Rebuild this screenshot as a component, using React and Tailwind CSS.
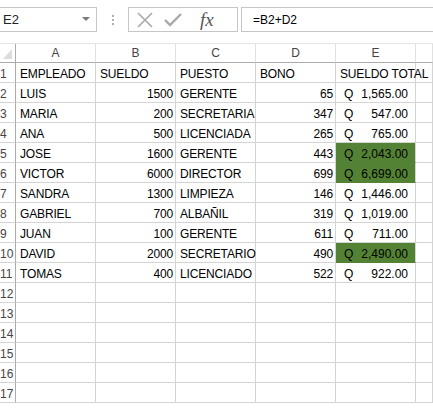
import React from "react";

const rows = [
  ["EMPLEADO", "SUELDO", "PUESTO", "BONO", null, false, "SUELDO TOTAL"],
  ["LUIS", "1500", "GERENTE", "65", "1,565.00", false],
  ["MARIA", "200", "SECRETARIA", "347", "547.00", false],
  ["ANA", "500", "LICENCIADA", "265", "765.00", false],
  ["JOSE", "1600", "GERENTE", "443", "2,043.00", true],
  ["VICTOR", "6000", "DIRECTOR", "699", "6,699.00", true],
  ["SANDRA", "1300", "LIMPIEZA", "146", "1,446.00", false],
  ["GABRIEL", "700", "ALBAÑIL", "319", "1,019.00", false],
  ["JUAN", "100", "GERENTE", "611", "711.00", false],
  ["DAVID", "2000", "SECRETARIO", "490", "2,490.00", true],
  ["TOMAS", "400", "LICENCIADO", "522", "922.00", false],
];

const font = { fontFamily: '"Liberation Sans", Arial, sans-serif' };

function RowHead({ n }) {
  return (
    <div className="h-[20px] w-[16px] border-r border-b border-r-[#ababab] border-b-[#d4d4d4] bg-white text-[12px] leading-[18px] pt-[2px] text-[#444] whitespace-nowrap flex justify-start">
      <span>{n}</span>
    </div>
  );
}

// text spills over into the next (empty) cell, like in Excel
function Cell({ children, right, className = "" }) {
  return (
    <div
      className={
        "relative h-[20px] border-r border-b border-[#d4d4d4] whitespace-nowrap text-[12px] leading-[18px] pt-[2px] text-black tracking-[-0.15px] " +
        (right ? "text-right pr-[2px] overflow-hidden " : "pl-[4px] overflow-visible z-10 ") +
        className
      }
    >
      {children}
    </div>
  );
}

function Money({ value, green }) {
  return (
    <div
      className={
        "h-[20px] border-r border-b flex justify-between pl-[8px] pr-[7px] text-[12px] leading-[18px] pt-[2px] text-black " +
        (green ? "bg-[#548235] border-b-[#548235] border-r-[#d4d4d4]" : "border-[#d4d4d4]")
      }
    >
      <span>Q</span>
      <span>{value}</span>
    </div>
  );
}

export default function App() {
  const empty = Array.from({ length: 6 }, (_, i) => i + 12);
  return (
    <div className="w-[433px] h-[408px] overflow-hidden bg-white" style={font}>
      {/* formula bar */}
      <div className="h-[43px] flex items-start pt-[7px] bg-white">
        <div className="ml-[-2px] w-[99px] h-[25px] border border-[#c6c6c6] flex items-center justify-between pl-[4px] pr-[6px]">
          <span className="text-[13px] text-[#222]">E2</span>
          <svg width="8" height="5" viewBox="0 0 8 5">
            <path d="M0 0 L8 0 L4 4 Z" fill="#7a7a7a" />
          </svg>
        </div>
        <div className="w-[31px] h-[25px] flex flex-col items-center justify-center gap-[2px]">
          <span className="w-[2px] h-[2px] bg-[#b0b0b0]" />
          <span className="w-[2px] h-[2px] bg-[#b0b0b0]" />
          <span className="w-[2px] h-[2px] bg-[#b0b0b0]" />
        </div>
        <div className="w-[110px] h-[25px] border border-[#c6c6c6] flex items-center pl-[8px] gap-[10px]">
          <svg width="16" height="16" viewBox="0 0 16 16">
            <path d="M1 1 L15 15 M15 1 L1 15" stroke="#a9a9a9" strokeWidth="1.6" fill="none" />
          </svg>
          <svg width="18" height="14" viewBox="0 0 18 14" className="ml-[1px]">
            <path d="M1 7 L6 12 L17 1" stroke="#a9a9a9" strokeWidth="2.4" fill="none" />
          </svg>
          <span
            className="ml-[8px] text-[19px] italic text-[#555] leading-none"
            style={{ fontFamily: '"Liberation Serif", "Times New Roman", serif' }}
          >
            fx
          </span>
        </div>
        <div className="ml-[3px] flex-1 h-[25px] border border-r-0 border-[#c6c6c6] flex items-center pl-[11px]">
          <span className="text-[12px] text-black">=B2+D2</span>
        </div>
      </div>

      {/* sheet */}
      <div className="grid grid-cols-[16px_repeat(5,80px)_1fr] border-t border-[#e6e6e6]">
        <div className="h-[19px] border-r border-b border-r-[#ababab] border-b-[#ababab] flex items-end justify-end pr-[3px] pb-[3px]">
          <svg width="9" height="10" viewBox="0 0 9 10">
            <path d="M9 0 L9 10 L0 10 Z" fill="#dcdcdc" />
          </svg>
        </div>
        {["A", "B", "C", "D", "E", ""].map((l, i) => (
          <div
            key={i}
            className="h-[19px] border-r border-b border-r-[#e1e1e1] border-b-[#ababab] text-center text-[12px] leading-[18px] text-[#444]"
          >
            {l}
          </div>
        ))}

        {rows.map((r, i) => (
          <React.Fragment key={i}>
            <RowHead n={i + 1} />
            <Cell>{r[0]}</Cell>
            <Cell right={i > 0}>{r[1]}</Cell>
            <Cell>{r[2]}</Cell>
            <Cell right={i > 0}>{r[3]}</Cell>
            {i === 0 ? <Cell>{r[6]}</Cell> : <Money value={r[4]} green={r[5]} />}
            <Cell />
          </React.Fragment>
        ))}

        {empty.map((n) => (
          <React.Fragment key={n}>
            <RowHead n={n} />
            <Cell />
            <Cell />
            <Cell />
            <Cell />
            <Cell />
            <Cell />
          </React.Fragment>
        ))}
      </div>
    </div>
  );
}
